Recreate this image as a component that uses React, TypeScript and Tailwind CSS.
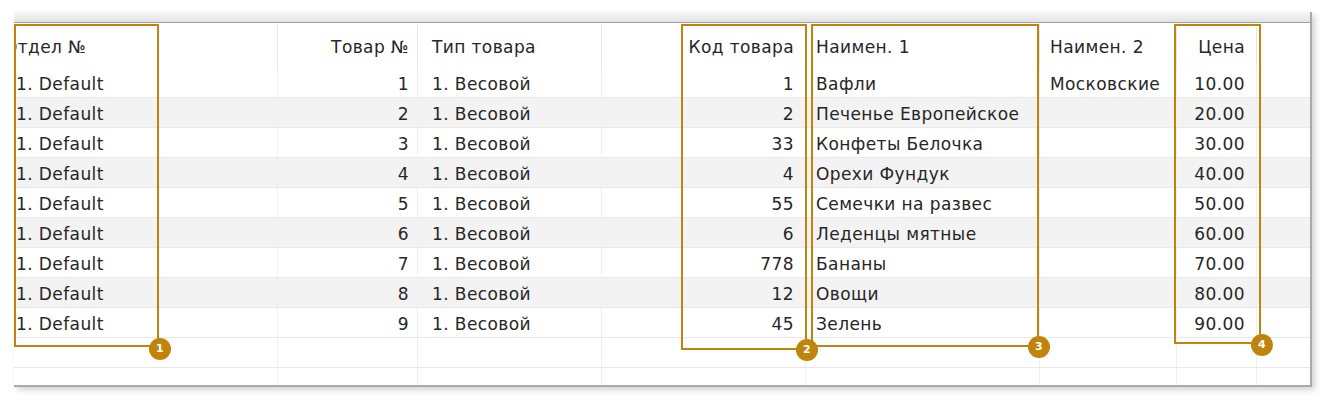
import React from "react";

type Col = {
  title: string;
  width: string;
  cell: string;
  head: string;
};

const cols: Col[] = [
  { title: "Отдел №", width: "w-[264px]", cell: "justify-start pl-[2px]", head: "justify-start" },
  { title: "Товар №", width: "w-[140px]", cell: "justify-end pr-[8px]", head: "justify-end pr-[8px]" },
  { title: "Тип товара", width: "w-[184px]", cell: "justify-start pl-[14px]", head: "justify-start pl-[14px]" },
  { title: "Код товара", width: "w-[204px]", cell: "justify-end pr-[11px]", head: "justify-end pr-[11px]" },
  { title: "Наимен. 1", width: "w-[234px]", cell: "justify-start pl-[10px]", head: "justify-start pl-[10px]" },
  { title: "Наимен. 2", width: "w-[137px]", cell: "justify-start pl-[10px]", head: "justify-start pl-[10px]" },
  { title: "Цена", width: "w-[80px]", cell: "justify-end pr-[11px]", head: "justify-end pr-[11px]" },
  { title: "", width: "flex-1", cell: "", head: "" },
];

const names = [
  "Вафли",
  "Печенье Европейское",
  "Конфеты Белочка",
  "Орехи Фундук",
  "Семечки на развес",
  "Леденцы мятные",
  "Бананы",
  "Овощи",
  "Зелень",
];
const codes = ["1", "2", "33", "4", "55", "6", "778", "12", "45"];

const rows = names.map((name, i) => [
  "1. Default",
  String(i + 1),
  "1. Весовой",
  codes[i],
  name,
  i === 0 ? "Московские" : "",
  `${(i + 1) * 10}.00`,
  "",
]);

function Badge({ n, className }: { n: number; className: string }) {
  return (
    <div
      className={`absolute flex h-[22px] w-[22px] items-center justify-center rounded-full bg-[#c0840c] text-[11px] font-bold text-white ${className}`}
    >
      {n}
    </div>
  );
}

export default function App() {
  return (
    <div
      className="relative h-[404px] w-[1329px] overflow-hidden bg-white pl-[14px] pt-[12px] text-[17px] tracking-[0.4px] text-[#262626]"
      style={{ fontFamily: '"DejaVu Sans", sans-serif' }}
    >
      <div className="w-[1298px] border-b-2 border-r-2 border-[#a9a9a9] bg-white shadow-[3px_3px_6px_rgba(0,0,0,0.18)]">
        <div className="h-[11px] border-b border-[#a0a0a0] bg-gradient-to-b from-[#f6f6f6] to-[#e4e4e4]" />

        {/* header */}
        <div className="flex h-[45px]">
          {cols.map((c, i) => (
            <div
              key={i}
              className={`flex shrink-0 items-center overflow-hidden pt-[4px] ${c.width} ${c.head} ${
                i < 7 ? "border-r border-[#e6e6e6]" : ""
              }`}
            >
              <span className={`whitespace-nowrap ${i === 0 ? "-ml-[10px]" : ""}`}>{c.title}</span>
            </div>
          ))}
        </div>

        {/* rows */}
        {rows.map((r, ri) => (
          <div
            key={ri}
            className={`flex h-[30px] border-b border-[#e8e8e8] ${ri % 2 === 1 ? "bg-[#f3f3f3]" : "bg-white"}`}
          >
            {r.map((v, ci) => (
              <div
                key={ci}
                className={`flex shrink-0 items-center overflow-hidden pt-[5px] ${cols[ci].width} ${cols[ci].cell} ${
                  ci < 7 ? "border-r border-[#efefef]" : ""
                }`}
              >
                <span className="whitespace-nowrap">{v}</span>
              </div>
            ))}
          </div>
        ))}

        {/* empty rows */}
        {[30, 17].map((h, k) => (
          <div key={k} className={`flex ${h === 30 ? "h-[30px] border-b border-[#e8e8e8]" : "h-[17px]"}`}>
            {cols.map((c, ci) => (
              <div key={ci} className={`shrink-0 ${c.width} ${ci < 7 ? "border-r border-[#efefef]" : ""}`} />
            ))}
          </div>
        ))}
      </div>

      {/* annotation frames */}
      <div className="absolute left-[14px] top-[24px] h-[323px] w-[145px] border-2 border-[#c0840c]" />
      <Badge n={1} className="left-[149px] top-[338px]" />

      <div className="absolute left-[681px] top-[24px] h-[326px] w-[126px] border-2 border-[#c0840c]" />
      <Badge n={2} className="left-[796px] top-[339px]" />

      <div className="absolute left-[811px] top-[24px] h-[323px] w-[228px] border-2 border-[#c0840c]" />
      <Badge n={3} className="left-[1028px] top-[336px]" />

      <div className="absolute left-[1174px] top-[24px] h-[320px] w-[87px] border-2 border-[#c0840c]" />
      <Badge n={4} className="left-[1251px] top-[334px]" />
    </div>
  );
}
